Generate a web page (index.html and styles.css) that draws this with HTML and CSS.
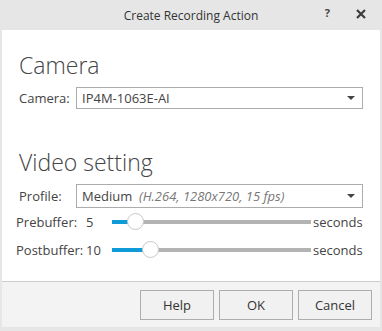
FILE: index.html
```html
<!DOCTYPE html>
<html lang="en">
<head>
  <meta charset="UTF-8">
  <meta name="viewport" content="width=device-width, initial-scale=1.0">
  <title>Create Recording Action</title>
  <link rel="stylesheet" href="styles.css">
</head>
<body>
  <div class="dialog">
    <div class="titlebar">
      <span class="title">Create Recording Action</span>
      <div class="controls">
        <span class="help">?</span>
        <svg class="close" width="10" height="10" viewBox="0 0 10 10">
          <path d="M1 1L9 9M9 1L1 9" stroke="#3c3c3c" stroke-width="2.2" fill="none"/>
        </svg>
      </div>
    </div>

    <div class="content">
      <h2 class="heading">Camera</h2>
      <div class="row">
        <span class="label">Camera:</span>
        <div class="select cam">
          <span>IP4M-1063E-AI</span>
          <span class="arrow"></span>
        </div>
      </div>

      <h2 class="heading video">Video setting</h2>
      <div class="row">
        <span class="label">Profile:</span>
        <div class="select profile">
          <span>Medium&nbsp;&nbsp;<i class="muted">(H.264, 1280x720, 15 fps)</i></span>
          <span class="arrow"></span>
        </div>
      </div>

      <div class="slider-row first">
        <span class="s-label">Prebuffer:</span>
        <span class="s-value">5</span>
        <div class="slider">
          <div class="fill" style="width: 23px"></div>
          <div class="thumb" style="left: 15px"></div>
        </div>
        <span class="unit">seconds</span>
      </div>
      <div class="slider-row">
        <span class="s-label">Postbuffer:</span>
        <span class="s-value">10</span>
        <div class="slider">
          <div class="fill" style="width: 38px"></div>
          <div class="thumb" style="left: 30px"></div>
        </div>
        <span class="unit">seconds</span>
      </div>
    </div>

    <div class="footer">
      <button class="btn">Help</button>
      <button class="btn">OK</button>
      <button class="btn">Cancel</button>
    </div>
  </div>
</body>
</html>
```

FILE: styles.css
```css
body{
  margin: 0;
  background-color: #e6e6e6;
  font-family: "Open Sans", "Noto Sans", sans-serif;
  font-size: 13px;
  color: #444;
}

.dialog{
  width: 382px;
  height: 331px;
  display: flex;
  flex-direction: column;
}

/* title bar */
.titlebar{
  height: 30px;
  flex-shrink: 0;
  display: grid;
  grid-template-columns: 1fr auto 1fr;
  align-items: center;
}

.titlebar .title{
  grid-column: 2;
  font-size: 12px;
  color: #333;
}

.titlebar .controls{
  display: flex;
  justify-content: flex-end;
  align-items: center;
  padding-right: 16px;
}

.titlebar .help{
  font-size: 11px;
  font-weight: 700;
  color: #444;
  margin-right: 26px;
  margin-top: -6px;
}

.titlebar .close{
  margin-top: -3px;
}

/* body */
.content{
  flex: 1;
  margin: 0 2px;
  padding: 0 17px;
  background-color: #fff;
}

.heading{
  margin: 20px 0 0;
  font-size: 23px;
  font-weight: 300;
  line-height: 30px;
  color: #444;
}

.heading.video{
  margin-top: 38px;
}

.row{
  display: flex;
  align-items: center;
  margin-top: 7px;
}

.label{
  width: 57px;
  flex-shrink: 0;
}

.select{
  display: flex;
  align-items: center;
  justify-content: space-between;
  height: 20px;
  padding: 0 7px 0 5px;
  border: 1px solid #acacac;
  box-sizing: content-box;
  color: #444;
}

.select.cam{
  width: 274px;
}

.select.profile{
  width: 277px;
  height: 22px;
}

.select .muted{
  color: #777;
}

.arrow{
  width: 0;
  height: 0;
  border-left: 4px solid transparent;
  border-right: 4px solid transparent;
  border-top: 4px solid #444;
}

/* sliders */
.slider-row{
  display: flex;
  align-items: center;
  height: 28px;
  margin-left: -3px;
}

.slider-row.first{
  margin-top: 0;
}

.s-label{
  width: 70px;
  flex-shrink: 0;
}

.s-value{
  width: 26px;
}

.slider{
  position: relative;
  width: 199px;
  height: 4px;
  background-color: #b3b3b3;
}

.slider .fill{
  height: 100%;
  background-color: #0f9ad8;
}

.slider .thumb{
  position: absolute;
  top: -7px;
  width: 17px;
  height: 17px;
  box-sizing: border-box;
  border: 1px solid #c8c8c8;
  border-radius: 50%;
  background-color: #fff;
}

.unit{
  margin-left: 2px;
}

/* footer */
.footer{
  height: 45px;
  flex-shrink: 0;
  margin: 0 2px 4px;
  padding-right: 8px;
  display: flex;
  justify-content: flex-end;
  align-items: center;
  gap: 5px;
  background-color: #f3f3f3;
  border-top: 1px solid #cccccc;
}

.btn{
  width: 74px;
  height: 30px;
  border: 1px solid #adadad;
  background-color: #f1f1f1;
  font-family: inherit;
  font-size: 13px;
  color: #333;
}
```
